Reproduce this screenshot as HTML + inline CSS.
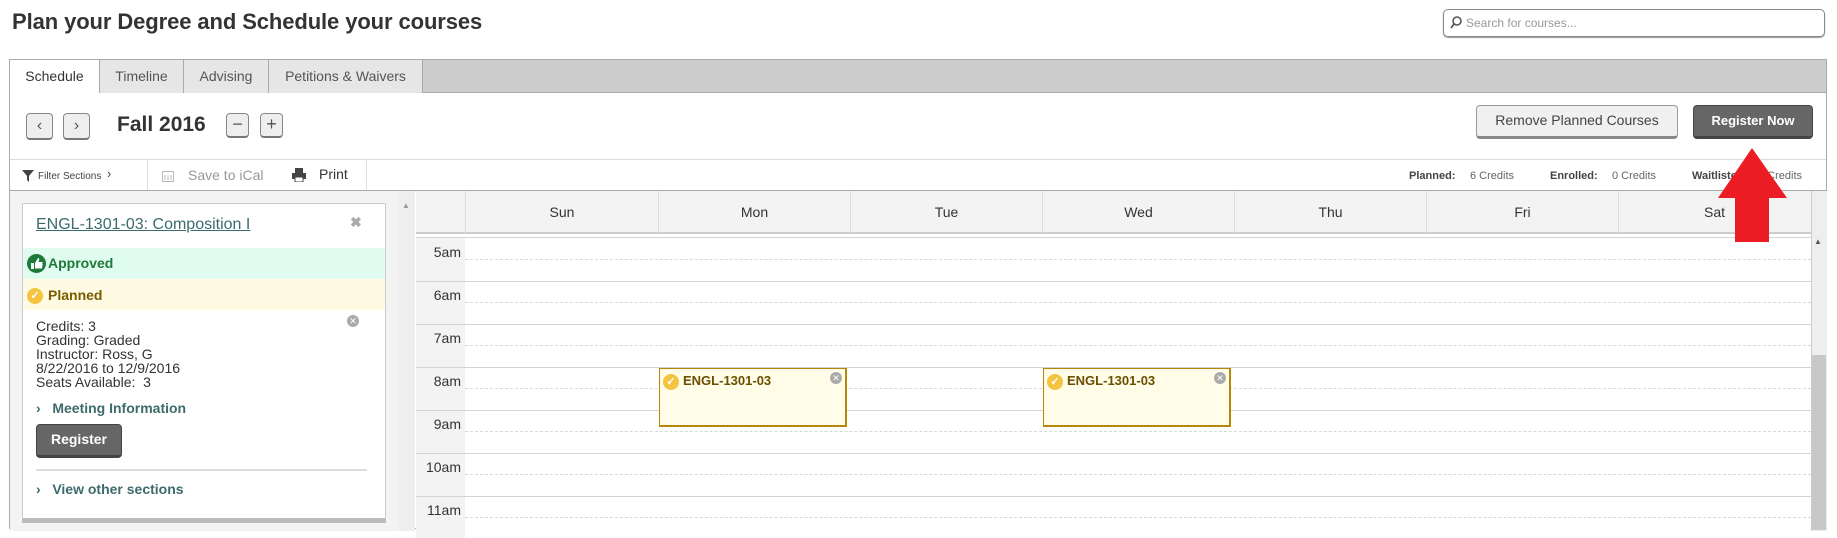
<!DOCTYPE html>
<html><head><meta charset="utf-8"><style>
*{box-sizing:border-box;margin:0;padding:0}
body{width:1837px;height:524px;overflow:hidden;background:#fff;font-family:"Liberation Sans",sans-serif;color:#333;position:relative}
.a{position:absolute}
.btn{position:absolute;border-radius:4px;font-size:14px;text-align:center}
.day{position:absolute;top:0;height:42px;border-left:1px solid #ddd;font-size:14px;text-align:center;line-height:42px;color:#333}
.hr{position:absolute;left:0;right:0;border-top:1px solid #d4d4d4}
.hh{position:absolute;left:49px;right:0;border-top:1px dashed #d8d8d8}
.tl{position:absolute;left:0;width:45px;text-align:right;font-size:14px;color:#333}
.ev{position:absolute;background:#fffde8;border:2px solid #b8860b;border-width:1px 2px 2px 1px;height:59px}
.chk{display:inline-block;width:16px;height:16px;border-radius:50%;background:#f5c342;color:#fff;font-size:11px;line-height:16px;text-align:center;font-weight:bold}
.xc{position:absolute;width:12px;height:12px;border-radius:50%;background:#aaa;color:#fff;font-size:9px;line-height:12px;text-align:center}
</style></head><body>
<div class="a" style="left:12px;top:9px;font-size:22px;font-weight:bold;color:#333;letter-spacing:-0.1px">Plan your Degree and Schedule your courses</div>
<div class="a" style="left:1443px;top:9px;width:382px;height:28px;border:1px solid #888;border-radius:5px;box-shadow:0 1px 1px #999">
 <svg class="a" style="left:6px;top:6px" width="12" height="14"><circle cx="7" cy="5" r="4" fill="none" stroke="#555" stroke-width="1.6"/><line x1="4" y1="8" x2="1" y2="12" stroke="#555" stroke-width="1.8"/></svg>
 <span class="a" style="left:22px;top:6px;font-size:12px;color:#999">Search for courses...</span></div>

<div class="a" style="left:9px;top:59px;width:1818px;height:470px;border:1px solid #aaa;background:#fff">
 <div class="a" style="left:0;top:0;right:0;height:33px;background:#ccc;border-bottom:1px solid #aaa"></div>
 <div class="a" style="left:0;top:0;width:89px;height:34px;background:#fff;font-size:14px;line-height:33px;text-align:center">Schedule</div>
 <div class="a" style="left:89px;top:0;width:84px;height:33px;background:#e6e6e6;border-left:1px solid #aaa;font-size:14px;line-height:33px;text-align:center;color:#555">Timeline</div>
 <div class="a" style="left:173px;top:0;width:85px;height:33px;background:#e6e6e6;border-left:1px solid #aaa;font-size:14px;line-height:33px;text-align:center;color:#555">Advising</div>
 <div class="a" style="left:258px;top:0;width:155px;height:33px;background:#e6e6e6;border-left:1px solid #aaa;border-right:1px solid #aaa;font-size:14px;line-height:33px;text-align:center;color:#555">Petitions &amp; Waivers</div>

 <div class="btn" style="left:16px;top:53px;width:27px;height:27px;background:#eee;border:1px solid #888;border-bottom:2px solid #777;line-height:23px;font-size:16px;color:#555">&#8249;</div>
 <div class="btn" style="left:53px;top:53px;width:27px;height:27px;background:#eee;border:1px solid #888;border-bottom:2px solid #777;line-height:23px;font-size:16px;color:#555">&#8250;</div>
 <div class="a" style="left:107px;top:53px;font-size:21px;font-weight:bold;color:#333">Fall 2016</div>
 <div class="btn" style="left:216px;top:53px;width:23px;height:25px;background:#eee;border:1px solid #888;border-bottom:2px solid #777;line-height:21px;font-size:18px;color:#555">&#8722;</div>
 <div class="btn" style="left:250px;top:53px;width:23px;height:25px;background:#eee;border:1px solid #888;border-bottom:2px solid #777;line-height:21px;font-size:18px;color:#555">+</div>
 <div class="btn" style="left:1466px;top:45px;width:202px;height:34px;background:#f0f0f0;border:1px solid #999;border-bottom:3px solid #888;line-height:29px;color:#444">Remove Planned Courses</div>
 <div class="btn" style="left:1683px;top:45px;width:120px;height:34px;background:#666;border:1px solid #444;border-bottom:3px solid #444;line-height:29px;color:#fff;font-weight:bold;font-size:13px">Register Now</div>

 <div class="a" style="left:0;right:0;top:99px;height:32px;border-top:1px solid #ddd;border-bottom:1px solid #aaa"></div>
 <svg class="a" style="left:12px;top:110px" width="12" height="12"><path d="M0 0H12L7 6V12L5 10V6Z" fill="#444"/></svg>
 <span class="a" style="left:28px;top:111px;font-size:10px;color:#444">Filter Sections</span>
 <span class="a" style="left:97px;top:106px;font-size:13px;color:#444">&#8250;</span>
 <div class="a" style="left:137px;top:100px;width:1px;height:30px;background:#ddd"></div>
 <svg class="a" style="left:152px;top:110px" width="12" height="12"><rect x="0.5" y="1.5" width="11" height="10" fill="none" stroke="#bbb"/><path d="M3 5v5M6 5v5M9 5v5" stroke="#bbb"/></svg>
 <span class="a" style="left:178px;top:107px;font-size:14px;color:#999">Save to iCal</span>
 <svg class="a" style="left:282px;top:108px" width="14" height="14"><rect x="3" y="0" width="8" height="5" fill="#444"/><rect x="0" y="5" width="14" height="6" fill="#444"/><rect x="3" y="9" width="8" height="5" fill="#fff" stroke="#444"/></svg>
 <span class="a" style="left:309px;top:106px;font-size:14px;color:#333">Print</span>
 <div class="a" style="left:356px;top:100px;width:1px;height:30px;background:#ddd"></div>
 <span class="a" style="left:1399px;top:110px;font-size:11px;color:#444;font-weight:bold">Planned:</span>
 <span class="a" style="left:1460px;top:110px;font-size:11px;color:#666">6 Credits</span>
 <span class="a" style="left:1540px;top:110px;font-size:11px;color:#444;font-weight:bold">Enrolled:</span>
 <span class="a" style="left:1602px;top:110px;font-size:11px;color:#666">0 Credits</span>
 <span class="a" style="left:1682px;top:110px;font-size:11px;color:#444;font-weight:bold">Waitlisted:</span>
 <span class="a" style="left:1748px;top:110px;font-size:11px;color:#666">0 Credits</span>

 <!-- left pane -->
 <div class="a" style="left:0;top:131px;width:405px;height:340px;background:#f3f3f3;border-right:1px solid #bbb"></div>
 <div class="a" style="left:389px;top:131px;width:16px;height:340px;background:#eee"></div>
 <div class="a" style="left:392px;top:141px;font-size:8px;color:#999">&#9650;</div>
 <div class="a" style="left:12px;top:143px;width:364px;height:320px;background:#fff;border:1px solid #ccc;border-bottom:5px solid #bbb">
  <div class="a" style="left:13px;top:12px;font-size:16px;color:#3d6b6b;text-decoration:underline">ENGL-1301-03: Composition I</div>
  <div class="a" style="left:327px;top:10px;font-size:14px;color:#aaa;font-weight:bold">&#10006;</div>
  <div class="a" style="left:0;top:44px;width:362px;height:31px;background:#e0fbef"></div>
  <svg class="a" style="left:4px;top:50px" width="19" height="19"><circle cx="9.5" cy="9.5" r="9.5" fill="#1d7a3a"/><path d="M4 9h3v6H4z M8 9l3-5c1 0 1.5 1 1 2.5L11.5 8H15c1 0 1 1.5 0 1.6 1 .3 1 1.4 0 1.6 .8 .3 .8 1.4 0 1.6 .6 .4 .4 1.7-.6 1.7H8z" fill="#fff"/></svg>
  <div class="a" style="left:25px;top:51px;font-size:14px;font-weight:bold;color:#1d7a3a">Approved</div>
  <div class="a" style="left:0;top:75px;width:362px;height:31px;background:#fffbe3"></div>
  <div class="a" style="left:4px;top:82px"><span class="chk">&#10003;</span></div>
  <div class="a" style="left:25px;top:83px;font-size:14px;font-weight:bold;color:#7a5a00">Planned</div>
  <div class="xc" style="left:324px;top:111px">&#10005;</div>
  <div class="a" style="left:13px;top:115px;font-size:14px;line-height:14px;color:#333">Credits: 3<br>Grading: Graded<br>Instructor: Ross, G<br>8/22/2016 to 12/9/2016<br>Seats Available:&nbsp; 3</div>
  <div class="a" style="left:13px;top:196px;font-size:14px;color:#3d6b6b;font-weight:bold">&#8250;&nbsp;&nbsp; Meeting Information</div>
  <div class="btn" style="left:13px;top:220px;width:86px;height:34px;background:#666;border:1px solid #444;border-bottom:3px solid #444;color:#fff;font-weight:bold;line-height:29px;font-size:14px">Register</div>
  <div class="a" style="left:13px;top:265px;width:331px;height:2px;background:#ddd"></div>
  <div class="a" style="left:13px;top:277px;font-size:14px;color:#3d6b6b;font-weight:bold">&#8250;&nbsp;&nbsp; View other sections</div>
 </div>

 <!-- grid -->
 <div class="a" style="left:406px;top:131px;width:1395px;height:43px;background:#f3f3f3;border-bottom:2px solid #ccc">
  <div class="day" style="left:49px;width:193px">Sun</div>
  <div class="day" style="left:242px;width:192px">Mon</div>
  <div class="day" style="left:434px;width:192px">Tue</div>
  <div class="day" style="left:626px;width:192px">Wed</div>
  <div class="day" style="left:818px;width:192px">Thu</div>
  <div class="day" style="left:1010px;width:192px">Fri</div>
  <div class="day" style="left:1202px;width:192px">Sat</div>
 </div>
 <div class="a" style="left:1801px;top:131px;width:16px;height:340px;background:#eee;border-left:1px solid #ccc"></div>
 <div class="a" style="left:1804px;top:177px;font-size:8px;color:#555">&#9650;</div>
 <div class="a" style="left:1802px;top:295px;width:14px;height:175px;background:#c8c8c8"></div>
 <div class="a" style="left:406px;top:177px;width:1395px;height:300px;background:#fff;border-top:1px solid #d4d4d4">
  <div class="a" style="left:0;top:0;width:49px;height:300px;background:#f3f3f3"></div>
  <div class="tl" style="top:6px">5am</div><div class="hh" style="top:21px"></div>
  <div class="hr" style="top:43px"></div><div class="tl" style="top:49px">6am</div><div class="hh" style="top:64px"></div>
  <div class="hr" style="top:86px"></div><div class="tl" style="top:92px">7am</div><div class="hh" style="top:107px"></div>
  <div class="hr" style="top:129px"></div><div class="tl" style="top:135px">8am</div><div class="hh" style="top:150px"></div>
  <div class="hr" style="top:172px"></div><div class="tl" style="top:178px">9am</div><div class="hh" style="top:193px"></div>
  <div class="hr" style="top:215px"></div><div class="tl" style="top:221px">10am</div><div class="hh" style="top:236px"></div>
  <div class="hr" style="top:258px"></div><div class="tl" style="top:264px">11am</div><div class="hh" style="top:279px"></div>
  <div class="ev" style="left:243px;top:130px;width:188px"><div class="a" style="left:3px;top:3px"><span class="chk">&#10003;</span></div><div class="a" style="left:23px;top:4px;font-size:13px;font-weight:bold;color:#6b4e00">ENGL-1301-03</div><div class="xc" style="left:170px;top:3px">&#10005;</div></div>
  <div class="ev" style="left:627px;top:130px;width:188px"><div class="a" style="left:3px;top:3px"><span class="chk">&#10003;</span></div><div class="a" style="left:23px;top:4px;font-size:13px;font-weight:bold;color:#6b4e00">ENGL-1301-03</div><div class="xc" style="left:170px;top:3px">&#10005;</div></div>
 </div>
</div>
<svg class="a" style="left:1716px;top:148px" width="74" height="96"><path d="M36 0L71 50H53V94H19V50H2Z" fill="#ec1c24"/></svg>
</body></html>
